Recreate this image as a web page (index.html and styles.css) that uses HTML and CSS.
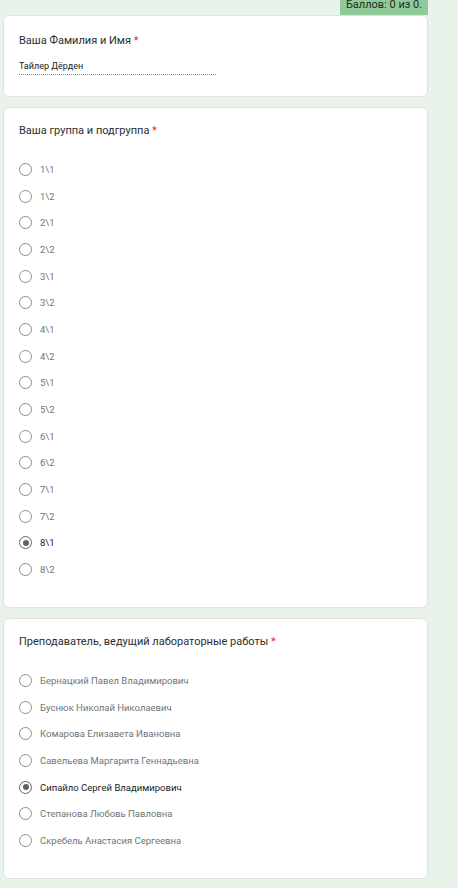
FILE: index.html
```html
<!DOCTYPE html>
<html lang="ru">
<head>
<meta charset="utf-8">
<link rel="stylesheet" href="styles.css">
</head>
<body>
<div class="page">
  <div class="score-row"><div class="score">Баллов: 0 из 0.</div></div>

  <section class="card card-name">
    <div class="q-title">Ваша Фамилия и Имя <span class="req">*</span></div>
    <div class="answer">Тайлер Дёрден</div>
  </section>

  <section class="card">
    <div class="q-title">Ваша группа и подгруппа <span class="req">*</span></div>
    <ul class="options">
      <li class="opt"><span class="radio"></span><span class="label">1\1</span></li>
      <li class="opt"><span class="radio"></span><span class="label">1\2</span></li>
      <li class="opt"><span class="radio"></span><span class="label">2\1</span></li>
      <li class="opt"><span class="radio"></span><span class="label">2\2</span></li>
      <li class="opt"><span class="radio"></span><span class="label">3\1</span></li>
      <li class="opt"><span class="radio"></span><span class="label">3\2</span></li>
      <li class="opt"><span class="radio"></span><span class="label">4\1</span></li>
      <li class="opt"><span class="radio"></span><span class="label">4\2</span></li>
      <li class="opt"><span class="radio"></span><span class="label">5\1</span></li>
      <li class="opt"><span class="radio"></span><span class="label">5\2</span></li>
      <li class="opt"><span class="radio"></span><span class="label">6\1</span></li>
      <li class="opt"><span class="radio"></span><span class="label">6\2</span></li>
      <li class="opt"><span class="radio"></span><span class="label">7\1</span></li>
      <li class="opt"><span class="radio"></span><span class="label">7\2</span></li>
      <li class="opt checked"><span class="radio"></span><span class="label">8\1</span></li>
      <li class="opt"><span class="radio"></span><span class="label">8\2</span></li>
    </ul>
  </section>

  <section class="card">
    <div class="q-title">Преподаватель, ведущий лабораторные работы <span class="req">*</span></div>
    <ul class="options">
      <li class="opt"><span class="radio"></span><span class="label">Бернацкий Павел Владимирович</span></li>
      <li class="opt"><span class="radio"></span><span class="label">Буснюк Николай Николаевич</span></li>
      <li class="opt"><span class="radio"></span><span class="label">Комарова Елизавета Ивановна</span></li>
      <li class="opt"><span class="radio"></span><span class="label">Савельева Маргарита Геннадьевна</span></li>
      <li class="opt checked"><span class="radio"></span><span class="label">Сипайло Сергей Владимирович</span></li>
      <li class="opt"><span class="radio"></span><span class="label">Степанова Любовь Павловна</span></li>
      <li class="opt"><span class="radio"></span><span class="label">Скребель Анастасия Сергеевна</span></li>
    </ul>
  </section>
</div>
</body>
</html>
```

FILE: styles.css
```css
html, body {
  margin: 0;
  padding: 0;
  background: #e9f3ea;
  font-family: Roboto, "Noto Sans", Arial, sans-serif;
  color: #202124;
}

.page {
  width: 425px;
  margin-left: 3px;
  display: flex;
  flex-direction: column;
  gap: 10px;
  padding-bottom: 10px;
}

.score-row {
  display: flex;
  justify-content: flex-end;
  height: 15px;
  margin-bottom: -10px;
  overflow: hidden;
}

.score {
  width: 88px;
  height: 15px;
  background: #8fca98;
  color: #1d2b1f;
  font-size: 11px;
  line-height: 10px;
  text-align: center;
  overflow: hidden;
}

.card {
  background: #ffffff;
  border: 1px solid #dfe3df;
  border-radius: 6px;
  padding: 16px 16px 24px 15px;
}

.card-name {
  height: 82px;
  box-sizing: border-box;
  padding-top: 18px;
}

.q-title {
  font-size: 11px;
  line-height: 14px;
  color: #2b2d30;
}

.req {
  color: #d93025;
}

.answer {
  margin-top: 12px;
  width: 197px;
  font-size: 9px;
  line-height: 12px;
  color: #202124;
  padding-bottom: 2px;
  border-bottom: 1px dotted #80868b;
}

.options {
  list-style: none;
  margin: 18px 0 0 0;
  padding: 0;
}

.opt {
  height: 26.7px;
  display: flex;
  align-items: center;
  gap: 8px;
}

.radio {
  width: 11px;
  height: 11px;
  border: 1px solid #8a8e92;
  border-radius: 50%;
  display: flex;
  align-items: center;
  justify-content: center;
  flex: none;
}

.label {
  font-size: 9.5px;
  color: #70757a;
}

.opt.checked .radio {
  border-color: #5f6368;
}

.opt.checked .radio::after {
  content: "";
  width: 6px;
  height: 6px;
  border-radius: 50%;
  background: #5f6368;
}

.opt.checked .label {
  color: #202124;
}
```
